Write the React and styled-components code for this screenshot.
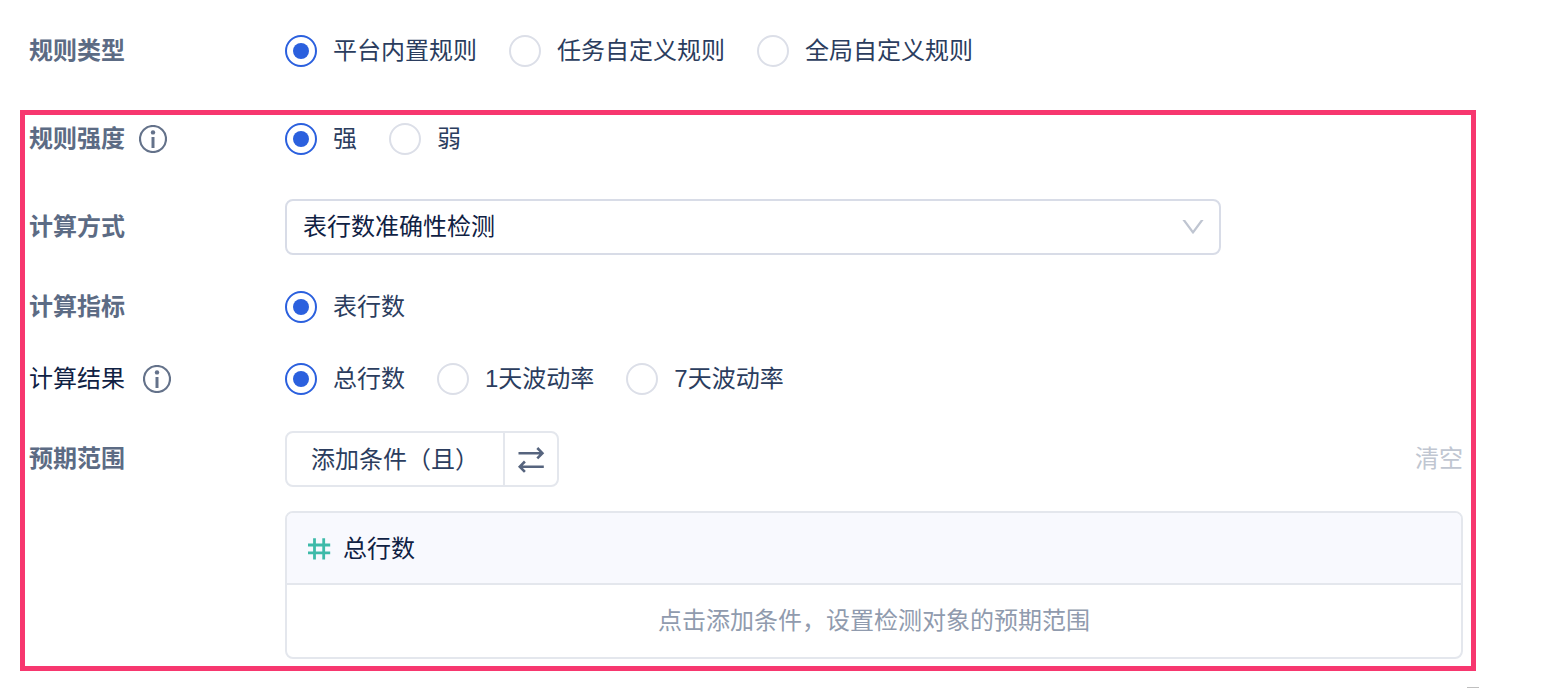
import React, { useState } from 'react';
import styled, { createGlobalStyle } from 'styled-components';

const GlobalStyle = createGlobalStyle`
  * {
    box-sizing: border-box;
  }
  body {
    margin: 0;
    background: #fff;
    color: #0f2143;
    font-family: 'Liberation Sans', 'Noto Sans CJK SC', sans-serif;
    font-size: 24px;
    line-height: 32px;
  }
  button,
  input,
  select {
    font: inherit;
    color: inherit;
    margin: 0;
  }
`;

const Page = styled.main`
  padding: 31px 78px 0 20px;
`;

const Section = styled.section`
  padding: 0 8px 0 4px;
  border: 5px solid ${({ $highlighted }) => ($highlighted ? '#f7376f' : 'transparent')};
  border-width: ${({ $highlighted }) => ($highlighted ? '5px' : '0 5px')};
  padding-bottom: ${({ $highlighted }) => ($highlighted ? '7px' : '39px')};
`;

const Row = styled.div`
  display: grid;
  grid-template-columns: 256px minmax(0, 1fr);
  align-items: center;
  min-height: ${({ $height }) => $height || '40px'};
  margin-bottom: ${({ $space }) => $space || '0'};
`;

const Label = styled.div`
  display: flex;
  align-items: center;
  gap: ${({ $strong }) => ($strong ? '14px' : '18px')};
  color: ${({ $strong }) => ($strong ? '#5c6b84' : '#0f2143')};
  font-weight: ${({ $strong }) => ($strong ? '700' : '400')};
`;

const RadioList = styled.div`
  display: flex;
  flex-wrap: wrap;
  gap: 32px;
`;

const RadioLabel = styled.label`
  display: flex;
  align-items: center;
  gap: 16px;
  color: #2b3d5e;
  cursor: pointer;
`;

const RadioInput = styled.input`
  appearance: none;
  display: grid;
  place-content: center;
  width: 32px;
  height: 32px;
  border: 2px solid #dcdfe8;
  border-radius: 50%;
  background: #fff;
  &:checked {
    border-color: #2b60de;
  }
  &:checked::before {
    content: '';
    width: 16px;
    height: 16px;
    border-radius: 50%;
    background: #2b60de;
  }
`;

const SelectWrapper = styled.div`
  position: relative;
  max-width: 936px;
`;

const Select = styled.select`
  appearance: none;
  display: block;
  width: 100%;
  height: 56px;
  padding: 0 56px 0 16px;
  border: 2px solid #d8dce7;
  border-radius: 8px;
  background: #fff;
`;

const SelectArrow = styled.svg`
  position: absolute;
  top: 16px;
  right: 16px;
  pointer-events: none;
`;

const Toolbar = styled.div`
  display: flex;
  align-items: center;
  justify-content: space-between;
`;

const ButtonGroup = styled.div`
  display: flex;
  height: 56px;
  border: 2px solid #e4e7ed;
  border-radius: 8px;
`;

const GroupButton = styled.button`
  display: flex;
  align-items: center;
  padding: ${({ $icon }) => ($icon ? '0 12px' : '2px 24px 0')};
  border: none;
  border-left: ${({ $icon }) => ($icon ? '2px solid #e4e7ed' : 'none')};
  background: none;
  color: #2b3d5e;
  cursor: pointer;
`;

const ClearButton = styled.button`
  padding: 0;
  border: none;
  background: none;
  color: #c0c6d1;
`;

const Panel = styled.div`
  margin: 24px 0 0 256px;
  border: 2px solid #e4e7ed;
  border-radius: 8px;
  overflow: hidden;
`;

const PanelHeader = styled.div`
  display: flex;
  align-items: center;
  gap: 12px;
  padding: 20px 20px 18px;
  border-bottom: 2px solid #e4e7ed;
  background: #f8f9fe;
`;

const PanelBody = styled.div`
  padding: 20px;
  color: #909bae;
  text-align: center;
`;

const Handle = styled.div`
  width: 12px;
  height: 1px;
  margin: 16px -3px 0 auto;
  background: #bfbfbf;
`;

function InfoIcon() {
  return (
    <svg width="28" height="28" viewBox="0 0 28 28" fill="none" aria-hidden="true">
      <circle cx="14" cy="14" r="13" stroke="#64728a" strokeWidth="2.2" />
      <circle cx="14" cy="7.4" r="2.2" fill="#64728a" />
      <path d="M14 12v11" stroke="#64728a" strokeWidth="3" />
    </svg>
  );
}

function SwapIcon() {
  return (
    <svg width="28" height="28" viewBox="0 0 28 28" fill="none" aria-hidden="true">
      <g stroke="#56647e" strokeWidth="2.6">
        <path d="M1.5 8.2H25M20.3 3L25.4 8.2L20.3 13.4" />
        <path d="M26.8 21.7H3.2M7.9 16.5L2.8 21.7L7.9 26.9" />
      </g>
    </svg>
  );
}

function HashIcon() {
  return (
    <svg width="24" height="24" viewBox="0 0 24 24" fill="none" aria-hidden="true">
      <path
        d="M7.5 1.3V22.5M16.7 1.3V22.5M1 8H23.2M1 15.8H23.2"
        stroke="#3dbaa9"
        strokeWidth="2.8"
      />
    </svg>
  );
}

function RadioGroup({ name, label, options }) {
  const [value, setValue] = useState(options[0]);

  return (
    <RadioList role="radiogroup" aria-label={label}>
      {options.map((option) => (
        <RadioLabel key={option}>
          <RadioInput
            type="radio"
            name={name}
            value={option}
            checked={value === option}
            onChange={() => setValue(option)}
          />
          {option}
        </RadioLabel>
      ))}
    </RadioList>
  );
}

function App() {
  return (
    <>
      <GlobalStyle />
      <Page>
        <Section>
          <Row>
            <Label $strong>规则类型</Label>
            <RadioGroup
              name="type"
              label="规则类型"
              options={['平台内置规则', '任务自定义规则', '全局自定义规则']}
            />
          </Row>
        </Section>

        <Section $highlighted>
          <Row $height="48px" $space="36px">
            <Label $strong>
              规则强度
              <InfoIcon />
            </Label>
            <RadioGroup name="strength" label="规则强度" options={['强', '弱']} />
          </Row>
          <Row $space="32px">
            <Label as="label" htmlFor="method" $strong>
              计算方式
            </Label>
            <SelectWrapper>
              <Select id="method">
                <option>表行数准确性检测</option>
              </Select>
              <SelectArrow width="24" height="24" viewBox="0 0 24 24" aria-hidden="true">
                <path d="M1.4 5H4.2L12 15.4L19.8 5H22.6L12.8 18.2Q12 19.2 11.2 18.2Z" fill="#bfc5d1" />
              </SelectArrow>
            </SelectWrapper>
          </Row>
          <Row $space="32px">
            <Label $strong>计算指标</Label>
            <RadioGroup name="metric" label="计算指标" options={['表行数']} />
          </Row>
          <Row $space="32px">
            <Label>
              计算结果
              <InfoIcon />
            </Label>
            <RadioGroup
              name="result"
              label="计算结果"
              options={['总行数', '1天波动率', '7天波动率']}
            />
          </Row>
          <Row>
            <Label $strong>预期范围</Label>
            <Toolbar>
              <ButtonGroup>
                <GroupButton type="button">添加条件（且）</GroupButton>
                <GroupButton type="button" $icon aria-label="切换">
                  <SwapIcon />
                </GroupButton>
              </ButtonGroup>
              <ClearButton type="button">清空</ClearButton>
            </Toolbar>
          </Row>
          <Panel>
            <PanelHeader>
              <HashIcon />
              总行数
            </PanelHeader>
            <PanelBody>点击添加条件，设置检测对象的预期范围</PanelBody>
          </Panel>
        </Section>
        <Handle />
      </Page>
    </>
  );
}

export default App;
